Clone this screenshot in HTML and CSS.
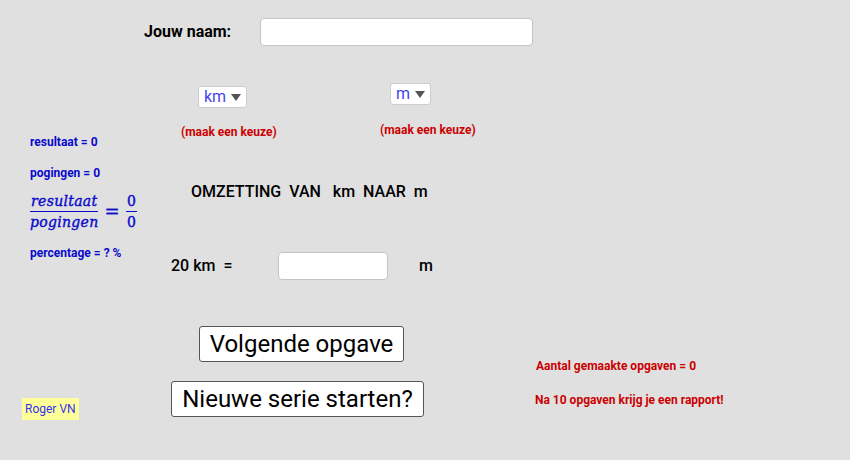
FILE: index.html
```html
<!DOCTYPE html>
<html lang="nl">
<head>
    <meta charset="UTF-8">
    <title>Omzetting van km naar m</title>
    <link rel="stylesheet" href="styles.css">
</head>
<body>
    <div class="applet">
        <!-- naam -->
        <div class="obj name-label">Jouw naam:</div>
        <input class="obj textfield name-field" type="text">

        <!-- keuzelijsten -->
        <div class="obj dropdown drop-from">km <span class="caret"></span></div>
        <div class="obj dropdown drop-to">m <span class="caret"></span></div>
        <div class="obj hint hint-from">(maak een keuze)</div>
        <div class="obj hint hint-to">(maak een keuze)</div>

        <!-- score links -->
        <div class="obj stat stat-result">resultaat = 0</div>
        <div class="obj stat stat-tries">pogingen = 0</div>
        <div class="obj formula">
            <span class="frac">
                <span class="num">resultaat</span>
                <span class="den">pogingen</span>
            </span>
            <span class="eq">=</span>
            <span class="frac digits">
                <span class="num">0</span>
                <span class="den">0</span>
            </span>
        </div>
        <div class="obj stat stat-percent">percentage = ? %</div>

        <!-- opgave -->
        <div class="obj title">OMZETTING&nbsp; VAN &nbsp; km&nbsp; NAAR&nbsp; m</div>
        <div class="obj question">20 km&nbsp; =</div>
        <input class="obj textfield answer-field" type="text">
        <div class="obj unit">m</div>

        <button class="obj btn btn-next">Volgende opgave</button>
        <button class="obj btn btn-new">Nieuwe serie starten?</button>

        <div class="obj author">Roger VN</div>
        <div class="obj report report-count">Aantal gemaakte opgaven = 0</div>
        <div class="obj report report-info">Na 10 opgaven krijg je een rapport!</div>
    </div>
</body>
</html>
```

FILE: styles.css
```css
body {
    margin: 0;
    background-color: #e0e0e0;
    font-family: Roboto, "Liberation Sans", sans-serif;
}

/* the applet is a free canvas: every object sits at its own spot */
.applet {
    position: relative;
    width: 850px;
    height: 460px;
    background-color: #e0e0e0;
    overflow: hidden;
}

.obj {
    position: absolute;
    line-height: 1;
    white-space: nowrap;
}

.name-label {
    left: 144px;
    top: 24px;
    font-size: 16px;
    font-weight: bold;
    color: #000;
}

.textfield {
    margin: 0;
    padding: 0 6px;
    box-sizing: border-box;
    background: #fff;
    border: 1px solid #c4c4c4;
    border-radius: 4px;
    outline: none;
}

.name-field {
    left: 260px;
    top: 18px;
    width: 273px;
    height: 28px;
}

.answer-field {
    left: 278px;
    top: 252px;
    width: 110px;
    height: 28px;
}

.dropdown {
    display: flex;
    align-items: center;
    gap: 5px;
    box-sizing: border-box;
    height: 22px;
    padding: 0 5px;
    background: #fff;
    border: 1px solid #cdcdcd;
    border-radius: 3px;
    color: #4444ee;
    font-size: 16px;
}

.drop-from {
    left: 198px;
    top: 86px;
}

.drop-to {
    left: 390px;
    top: 83px;
}

.caret {
    width: 0;
    height: 0;
    border-left: 5px solid transparent;
    border-right: 5px solid transparent;
    border-top: 7px solid #555;
}

.hint {
    font-size: 12px;
    font-weight: bold;
    color: #cc0000;
}

.hint-from {
    left: 181px;
    top: 126px;
}

.hint-to {
    left: 380px;
    top: 124px;
}

.stat {
    left: 30px;
    font-size: 12px;
    font-weight: bold;
    color: #0a0acc;
}

.stat-result { top: 136px; }
.stat-tries { top: 167px; }
.stat-percent { top: 247px; }

.formula {
    left: 30px;
    top: 194px;
    display: flex;
    align-items: center;
    gap: 6px;
    color: #0a0acc;
    font-family: "DejaVu Serif", "Liberation Serif", serif;
    font-style: italic;
    font-size: 14px;
    letter-spacing: 0.3px;
    -webkit-text-stroke: 0.4px #0a0acc;
}

.frac {
    display: inline-flex;
    flex-direction: column;
    align-items: center;
}

.frac .num {
    padding: 0 1px 3px;
    border-bottom: 1.5px solid #0a0acc;
}

.frac .den {
    padding-top: 3px;
}

.digits {
    font-style: normal;
}

.eq {
    font-style: normal;
    font-size: 18px;
}

.title {
    left: 191px;
    top: 184px;
    font-size: 16px;
    font-weight: 500;
    color: #000;
}

.question {
    left: 171px;
    top: 258px;
    font-size: 16px;
    font-weight: 500;
    color: #000;
}

.unit {
    left: 419px;
    top: 258px;
    font-size: 16px;
    font-weight: 500;
    color: #000;
}

.btn {
    margin: 0;
    padding: 0 9px;
    height: 36px;
    background: #fff;
    border: 1px solid #555;
    border-radius: 3px;
    font-family: Roboto, "Liberation Sans", sans-serif;
    font-size: 24px;
    color: #000;
    line-height: 1;
}

.btn-next {
    left: 199px;
    top: 326px;
    width: 205px;
}

.btn-new {
    left: 171px;
    top: 381px;
    width: 253px;
}

.author {
    left: 22px;
    top: 398px;
    padding: 5px 3px;
    background: #ffff99;
    color: #3333ee;
    font-size: 12px;
}

.report {
    font-size: 12px;
    font-weight: bold;
    color: #cc0000;
}

.report-count {
    left: 536px;
    top: 360px;
}

.report-info {
    left: 535px;
    top: 394px;
}
```
